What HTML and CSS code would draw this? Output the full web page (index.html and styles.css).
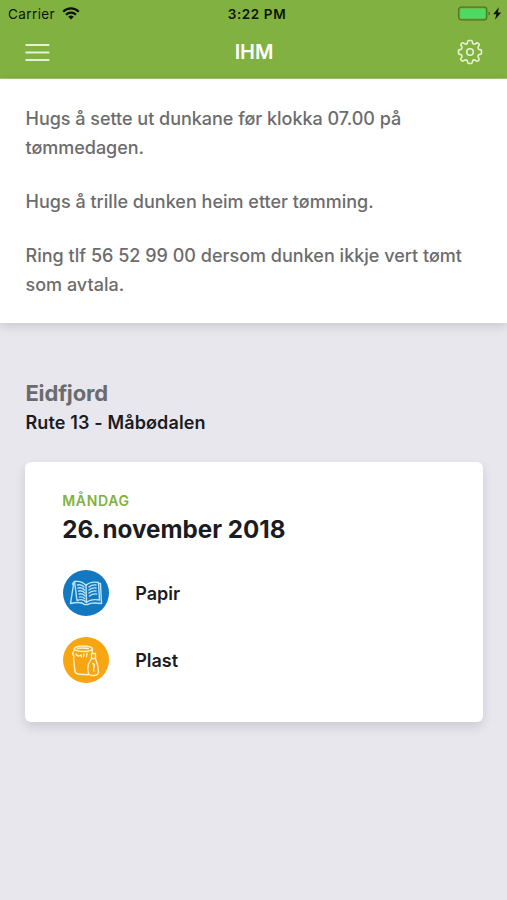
FILE: index.html
```html
<!DOCTYPE html>
<html lang="nn">
<head>
<meta charset="utf-8">
<title>IHM</title>
<link rel="stylesheet" href="styles.css">
</head>
<body>
<header class="top">
  <div class="status">
    <div class="carrier"><span>Carrier</span>
      <svg class="wifi" width="18" height="13" viewBox="0 0 18 13" fill="none" stroke="#0c1405" stroke-width="2.2"><path d="M1.2 4.7a11 11 0 0 1 15.6 0M4 7.700a7 7 0 0 1 10 0"/><path d="M9 12.6 6.2 9.8a4 4 0 0 1 5.6 0z" fill="#0c1405" stroke="none"/></svg>
    </div>
    <time class="clock">3:22 PM</time>
    <div class="power">
      <svg width="45" height="16" viewBox="0 0 45 16"><rect x=".7" y="1.200" width="28" height="12.6" rx="2.6" fill="none" stroke="#4b7724" stroke-width="1.3"/><rect x="2.3" y="2.8" width="24.8" height="9.4" rx="1.2" fill="#4cd964"/><path d="M30.500 5.500v4q1.600-.6 1.600-2t-1.600-2z" fill="#4b7724"/><path d="M40.8 1.200 35.200 8.200h3.200l-1.400 5.600L43.200 6.500h-3.300z" fill="#0c1405"/></svg>
    </div>
  </div>
  <nav class="bar">
    <svg class="menu" width="25" height="20" viewBox="0 0 25 20" stroke="#e6f3d2" stroke-width="1.8" stroke-linecap="round"><path d="M1.2 2h22.4M1.2 9.500h22.4M1.2 17h22.4"/></svg>
    <h1 class="title">IHM</h1>
    <svg class="gear" width="26" height="26" viewBox="0 0 26 26" fill="none" stroke="#e6f3d2" stroke-width="1.6" stroke-linejoin="round"><circle cx="13" cy="13" r="3.3"/><path d="M10.400 4.200 Q10.600 1.500 11.800 1.500 H14.200 Q15.400 1.500 15.600 4.200 Q16.800 5.700 18.500 4.800 Q20.300 3.300 21.200 4.200 L22 5 Q22.800 5.800 21.200 7.700 Q20.300 9.300 21.800 10.400 Q24.500 10.600 24.500 11.800 V14.200 Q24.500 15.400 21.800 15.600 Q20.300 16.800 21.200 18.500 Q22.700 20.300 21.800 21.200 L21 22 Q20.200 22.800 18.300 21.200 Q16.700 20.300 15.600 21.800 Q15.400 24.500 14.200 24.500 H11.800 Q10.600 24.500 10.400 21.800 Q9.200 20.300 7.500 21.200 Q5.700 22.700 4.800 21.800 L4 21 Q3.200 20.200 4.800 18.300 Q5.700 16.700 4.200 15.600 Q1.500 15.400 1.500 14.200 V11.800 Q1.500 10.600 4.200 10.400 Q5.700 9.200 4.800 7.500 Q3.300 5.700 4.200 4.800 L5 4 Q5.800 3.200 7.700 4.800 Q9.300 5.700 10.400 4.200z"/></svg>
  </nav>
</header>
<section class="notice">
  <p>Hugs å sette ut dunkane før klokka 07.00 på<br>tømmedagen.</p>
  <p>Hugs å trille dunken heim etter tømming.</p>
  <p>Ring tlf 56 52 99 00 dersom dunken ikkje vert tømt<br>som avtala.</p>
</section>
<main class="content">
  <h2 class="place">Eidfjord</h2>
  <p class="route">Rute 13 - Måbødalen</p>
  <article class="card">
    <p class="day">MÅNDAG</p>
    <h3 class="date"><span class="number">26. </span>november 2018</h3>
    <ul class="waste">
      <li><svg width="48" height="48" viewBox="0 0 48 48" fill="none" stroke="#b9e4f8" stroke-width="1.4" stroke-linecap="round" stroke-linejoin="round"><circle cx="24" cy="24" r="23" fill="#1279c1" stroke="none"/><path d="M24 16.5Q20 11.500 12.500 12.500L15 31.5Q21 29 24.5 33.5Q29 29.500 37.500 31L36.500 13.500Q28 12 24 16.500L24.500 33.500"/><path d="M12.500 12.500 10.500 15 11.500 15.500 8.500 34.500Q19 32 22.500 35.500H26Q29 33 39.500 34.500L38.500 14.500h-2M15.500 16q4-1 6.500 2M16 19q4-1 6.500 2M16.500 22q4-1 6.500 2M17 25q4-1 6 2M17.500 28q3-.5 5 1.500M27 18q3-2.500 7-2M27 21q3-2.500 7-2M27 24q3-2.500 7-2M27.500 27q3-2.500 7-2"/></svg><span>Papir</span></li>
      <li><svg width="48" height="48" viewBox="0 0 48 48" fill="none" stroke="#fff0cc" stroke-width="1.4" stroke-linecap="round" stroke-linejoin="round"><circle cx="24" cy="24" r="23" fill="#f8a512" stroke="none"/><path d="M12 13q1-3 9-3t9.500 2.500q-1 3-8.500 3t-10-2.500zM12 14.500l-1.500 3q2 2 1 5l1.500 13q.5 2.500 5 2.700l8.500.5M30.500 13.500l-.5 4M15.500 12.500q5-1 11 0M14 18q2 3 4 1.500M19 19l.5 2M22 18l-.5 3M25 17.500l-.5 3"/><path d="M29.500 17.500h4v5h-4zM29.300 23l-2.800 5q-1.500 5 0 9.500 1.500 2.500 5.500 2 4.200-.5 4.500-3 0-5.500-1.500-9.500l-1.500-4M31 27.500q2 1 1 3.500t0 4"/></svg><span>Plast</span></li>
    </ul>
  </article>
</main>
</body>
</html>
```
FILE: styles.css
```css
* { box-sizing: border-box; margin: 0; padding: 0; }
body { min-height: 900px; background: #e8e7ee; font-family: Inter, sans-serif; color: #1b1c1f; overflow: hidden; }
svg { display: block; flex: none; }
.top { height: 79px; background: #81b140; border-bottom: 1px solid #a3c671; }
.status { height: 27px; display: grid; grid-template-columns: 1fr auto 1fr; align-items: center; padding: 0 4px 0 8px; color: #0c1405; font-size: 13.500px; }
.carrier { display: flex; align-items: center; gap: 7px; letter-spacing: .4px; }
.carrier svg { margin-left: -.4px; }
.clock { font-weight: 600; letter-spacing: .6px; padding-left: 3px; }
.power { justify-self: end; }
.bar { height: 50px; display: grid; grid-template-columns: 1fr auto 1fr; align-items: center; padding: 0 24px 0 25px; }
.menu { margin-top: 2px; }
.title { font-size: 20px; line-height: 24px; font-weight: 600; letter-spacing: -.1px; color: #fff; }
.gear { justify-self: end; }
.notice { height: 244px; padding: 25px 25.500px 0; background: #fff; color: #6c6c6d; font-size: 18px; font-weight: 500; line-height: 29.300px; letter-spacing: -.02px; white-space: nowrap; box-shadow: 0 3px 10px rgba(0,0,0,.14); }
.notice p + p { margin-top: 24.500px; letter-spacing: .01px; }
.content { padding: 55px 24.500px 0 25.400px; }
.place { font-size: 22px; line-height: 30px; font-weight: 700; letter-spacing: -.15px; color: #6b6b6e; }
.route { padding-top: 1px; font-size: 18px; line-height: 28px; font-weight: 600; letter-spacing: .14px; }
.card { height: 260px; margin-top: 25px; padding: 29px 36.800px 0; background: #fff; border-radius: 6px; box-shadow: 0 5px 12px rgba(0,0,0,.12); }
.day { color: #81b140; font-size: 14px; line-height: 19px; font-weight: 600; letter-spacing: .7px; }
.date { padding-top: 1px; font-size: 24.200px; line-height: 38px; font-weight: 700; white-space: nowrap; }
.number { word-spacing: -3px; }
.waste { list-style: none; margin-top: 20px; display: grid; gap: 19px; }
.waste li { display: flex; align-items: center; gap: 25px; font-size: 18px; font-weight: 600; }
```
